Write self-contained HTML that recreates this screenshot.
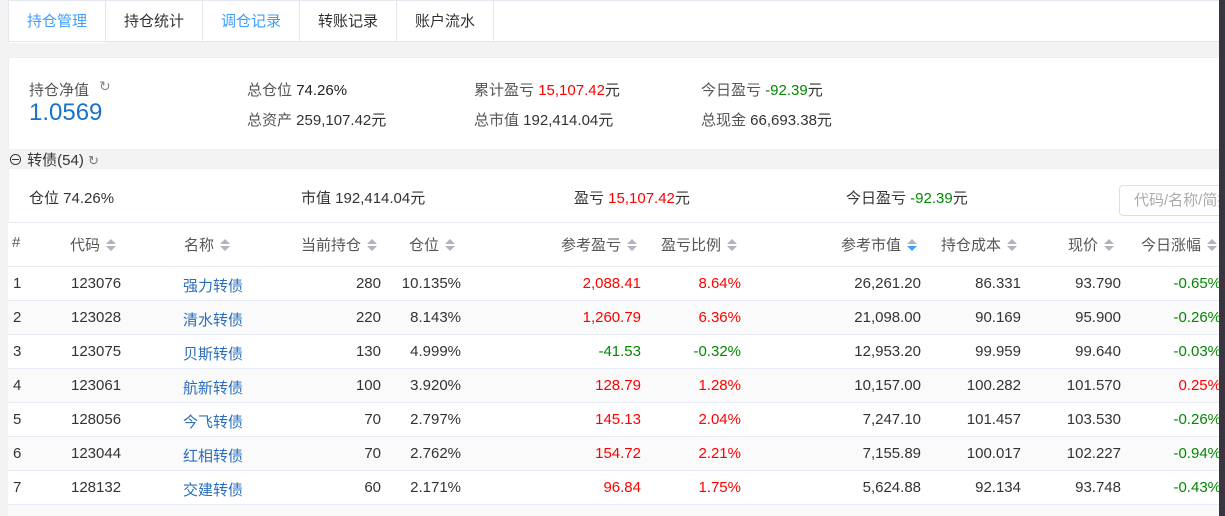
<!DOCTYPE html><html><head><meta charset="utf-8"><style>
*{margin:0;padding:0;box-sizing:border-box}
html,body{width:1225px;height:516px;overflow:hidden}
body{background:#f3f3f3;font-family:"Liberation Sans","Noto Sans CJK SC",sans-serif;font-size:15px;color:#333;position:relative}
.a{position:absolute;white-space:nowrap}
.tabs{position:absolute;left:8px;top:0;width:1212px;height:42px;background:#fff;border:1px solid #e4e7ed}
.tab{position:absolute;top:0;height:41px;line-height:42px;width:97px;text-align:center;font-size:15px;border-right:1px solid #e4e7ed;color:#303133}
.card{position:absolute;background:#fff;border:1px solid #ebeef5}
.r{text-align:right}
.red{color:#f00}.grn{color:#080}
.row{position:absolute;left:8px;width:1212px;height:34px;border-bottom:1px solid #e6ebf5}
.hd{color:#555}
.ar{display:inline-block;width:10px;height:12px;vertical-align:-1px;margin-left:6px;position:relative}
.ar:before{content:"";position:absolute;left:0;top:0;border:5px solid transparent;border-top:0;border-bottom:5px solid #b0b4bc}
.ar:after{content:"";position:absolute;left:0;top:7px;border:5px solid transparent;border-bottom:0;border-top:5px solid #b0b4bc}
.ar.b:after{border-top-color:#409eff}
.nm{color:#2a6ebb}
</style></head><body>
<div class="tabs">
<div class="tab" style="left:0;color:#409eff;border-bottom:1px solid #fff;height:42px">持仓管理</div>
<div class="tab" style="left:97px">持仓统计</div>
<div class="tab" style="left:194px;color:#409eff">调仓记录</div>
<div class="tab" style="left:291px">转账记录</div>
<div class="tab" style="left:388px">账户流水</div>
</div>
<div class="card" style="left:8px;top:57px;width:1212px;height:93px"></div>
<div class="a" style="left:29px;top:79px;color:#555">持仓净值</div>
<div class="a" style="left:99px;top:78px;font-size:14px;color:#888">↻</div>
<div class="a" style="left:29px;top:99px;font-size:24px;color:#1a73c8">1.0569</div>
<div class="a" style="left:247px;top:79px"><span style="color:#555">总仓位</span> <span style="color:#222">74.26%</span></div>
<div class="a" style="left:247px;top:109px"><span style="color:#555">总资产</span> 259,107.42元</div>
<div class="a" style="left:474px;top:79px"><span style="color:#555">累计盈亏</span> <span class="red">15,107.42</span>元</div>
<div class="a" style="left:474px;top:109px"><span style="color:#555">总市值</span> 192,414.04元</div>
<div class="a" style="left:701px;top:79px"><span style="color:#555">今日盈亏</span> <span class="grn">-92.39</span>元</div>
<div class="a" style="left:701px;top:109px"><span style="color:#555">总现金</span> 66,693.38元</div>
<div class="a" style="left:8px;top:149px">⊖ 转债(54) <span style="font-size:13px;color:#777">↻</span></div>
<div class="card" style="left:8px;top:168px;width:1212px;height:348px;border-color:#eef0f4"></div>
<div class="a" style="left:29px;top:187px">仓位 74.26%</div>
<div class="a" style="left:301px;top:187px">市值 192,414.04元</div>
<div class="a" style="left:574px;top:187px">盈亏 <span class="red">15,107.42</span>元</div>
<div class="a" style="left:846px;top:187px">今日盈亏 <span class="grn">-92.39</span>元</div>
<div class="a" style="left:1119px;top:185px;width:110px;height:31px;border:1px solid #dcdfe6;border-radius:4px;color:#aaa;line-height:29px;padding-left:14px;overflow:hidden">代码/名称/简拼</div>
<div class="row" style="top:222px;height:45px;border-top:1px solid #e6ebf5;background:#fff"></div>
<div class="a hd" style="left:12px;top:234px">#</div>
<div class="a hd" style="left:70px;top:234px">代码<i class="ar"></i></div>
<div class="a hd" style="left:184px;top:234px">名称<i class="ar"></i></div>
<div class="a hd" style="left:301px;top:234px">当前持仓<i class="ar"></i></div>
<div class="a hd" style="left:409px;top:234px">仓位<i class="ar"></i></div>
<div class="a hd" style="left:561px;top:234px">参考盈亏<i class="ar"></i></div>
<div class="a hd" style="left:661px;top:234px">盈亏比例<i class="ar"></i></div>
<div class="a hd" style="left:841px;top:234px">参考市值<i class="ar b"></i></div>
<div class="a hd" style="left:941px;top:234px">持仓成本<i class="ar"></i></div>
<div class="a hd" style="left:1068px;top:234px">现价<i class="ar"></i></div>
<div class="a hd" style="left:1141px;top:234px">今日涨幅<i class="ar"></i></div>
<div id="rows"></div>
<div class="a" style="left:1219px;top:0;width:6px;height:516px;background:#3a3340"></div>
<script>
var d=[["1","123076","强力转债","280","10.135%","2,088.41","8.64%","26,261.20","86.331","93.790","-0.65%"],
["2","123028","清水转债","220","8.143%","1,260.79","6.36%","21,098.00","90.169","95.900","-0.26%"],
["3","123075","贝斯转债","130","4.999%","-41.53","-0.32%","12,953.20","99.959","99.640","-0.03%"],
["4","123061","航新转债","100","3.920%","128.79","1.28%","10,157.00","100.282","101.570","0.25%"],
["5","128056","今飞转债","70","2.797%","145.13","2.04%","7,247.10","101.457","103.530","-0.26%"],
["6","123044","红相转债","70","2.762%","154.72","2.21%","7,155.89","100.017","102.227","-0.94%"],
["7","128132","交建转债","60","2.171%","96.84","1.75%","5,624.88","92.134","93.748","-0.43%"]];
var h="";
d.forEach(function(r,i){var t=267+i*34,y=t+8;
h+='<div class="row" style="top:'+t+'px;background:'+(i%2?'#fafafa':'#fff')+'"></div>';
h+='<div class="a" style="left:13px;top:'+y+'px">'+r[0]+'</div><div class="a" style="left:71px;top:'+y+'px">'+r[1]+'</div><div class="a nm" style="left:183px;top:'+y+'px">'+r[2]+'</div>';
var R=[[3,381],[4,461],[5,641],[6,741],[7,921],[8,1021],[9,1121],[10,1221]];
R.forEach(function(c){var v=r[c[0]],cl="";if(c[0]==5||c[0]==6||c[0]==10)cl=v.charAt(0)=="-"?"grn":"red";
h+='<div class="a r '+cl+'" style="right:'+(1225-c[1])+'px;top:'+y+'px">'+v+'</div>';});});
h+='<div class="row" style="top:505px;height:11px;border:0;background:#fafafa"></div>';
document.getElementById("rows").innerHTML=h;
</script>
</body></html>
